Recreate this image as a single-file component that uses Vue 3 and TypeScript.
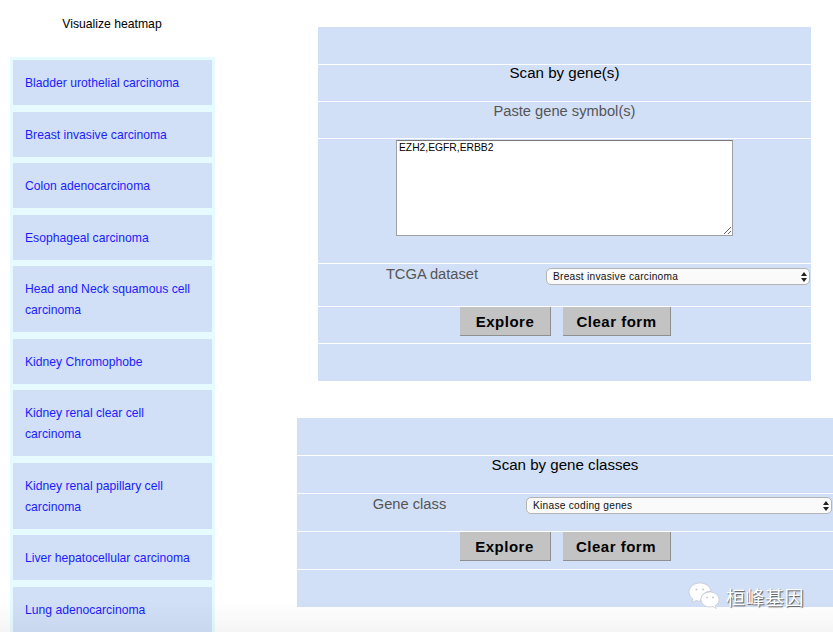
<template>
  <div class="page">
    <aside class="side">
      <h1 class="side-title">Visualize heatmap</h1>
      <ul class="cancer-list">
        <li v-for="c in cancers" :key="c">
          <a href="#" @click.prevent>{{ c }}</a>
        </li>
      </ul>
    </aside>

    <main class="main">
      <section class="panel panel-gene">
        <div class="row"></div>
        <div class="row title">Scan by gene(s)</div>
        <div class="row label">Paste gene symbol(s)</div>
        <div class="row row-area">
          <textarea v-model="genes" class="genes" spellcheck="false"></textarea>
        </div>
        <div class="row row-pick">
          <label class="label">TCGA dataset</label>
          <div class="pick">
            <select v-model="dataset">
              <option v-for="c in cancers" :key="c">{{ c }}</option>
            </select>
            <svg class="arrows" width="6" height="10" viewBox="0 0 6 10"><path d="M3 0 6 4H0zM3 10 0 6h6z" /></svg>
          </div>
        </div>
        <div class="row row-btns">
          <button type="button" class="btn-explore">Explore</button>
          <button type="button" class="btn-clear">Clear form</button>
        </div>
        <div class="row"></div>
      </section>

      <section class="panel panel-class">
        <div class="row"></div>
        <div class="row title">Scan by gene classes</div>
        <div class="row row-pick">
          <label class="label">Gene class</label>
          <div class="pick">
            <select v-model="geneClass">
              <option>Kinase coding genes</option>
              <option>Transcription factors</option>
            </select>
            <svg class="arrows" width="6" height="10" viewBox="0 0 6 10"><path d="M3 0 6 4H0zM3 10 0 6h6z" /></svg>
          </div>
        </div>
        <div class="row row-btns">
          <button type="button" class="btn-explore">Explore</button>
          <button type="button" class="btn-clear">Clear form</button>
        </div>
        <div class="row"></div>
      </section>
    </main>

    <!-- screenshot fade + watermark sit over the page -->
    <div class="fade"></div>
    <div class="mark">
      <svg width="32" height="28" viewBox="0 0 32 28">
        <path d="M12 1C6 1 1 5 1 10c0 3 1.600 5.400 4 7l-1 3.500 4-2c1.200.4 2.600.6 4 .6h1c-.6-5.600 3.600-9.800 10-10C22 4 17.500 1 12 1z" fill="#fff" stroke="#b9bcc4" stroke-width=".6" />
        <path d="M22 10c-5 0-9 3.400-9 7.500s4 7.500 9 7.500c1 0 2-.2 3-.4l3.200 1.900-.8-3c2.400-1.400 3.600-3.500 3.600-6 0-4.100-4-7.500-9-7.500z" fill="#fff" stroke="#b9bcc4" stroke-width=".6" />
        <circle cx="8.500" cy="7.500" r="1" fill="#c3c6cc" />
        <circle cx="15" cy="7.500" r="1" fill="#c3c6cc" />
        <circle cx="19" cy="15.500" r=".9" fill="#c3c6cc" />
        <circle cx="25" cy="15.500" r=".9" fill="#c3c6cc" />
      </svg>
      <span>桓峰基因</span>
    </div>
  </div>
</template>

<script setup lang="ts">
import { ref } from 'vue'

const cancers = [
  'Bladder urothelial carcinoma',
  'Breast invasive carcinoma',
  'Colon adenocarcinoma',
  'Esophageal carcinoma',
  'Head and Neck squamous cell carcinoma',
  'Kidney Chromophobe',
  'Kidney renal clear cell carcinoma',
  'Kidney renal papillary cell carcinoma',
  'Liver hepatocellular carcinoma',
  'Lung adenocarcinoma',
]

const genes = ref('EZH2,EGFR,ERBB2')
const dataset = ref('Breast invasive carcinoma')
const geneClass = ref('Kinase coding genes')
</script>

<style>
html, body {
  margin: 0;
  height: 100%;
  overflow: hidden;
  background: #fff;
}
</style>

<style scoped>
.page {
  position: relative;
  display: flex;
  width: 833px;
  height: 635px;
  overflow: hidden;
  font-family: "Liberation Sans", Arial, sans-serif;
  color: #000;
}

/* left list */
.side {
  width: 205px;
  margin-left: 10px;
  flex: none;
}
.side-title {
  margin: 17px 0 0;
  height: 40px;
  padding-right: 1px;
  font-size: 12.200px;
  line-height: 14px;
  font-weight: 400;
  text-align: center;
}
.cancer-list {
  list-style: none;
  margin: 0;
  padding: 3px;
  background: #e6fbff;
  display: flex;
  flex-direction: column;
  gap: 6.500px;
}
.cancer-list a {
  display: block;
  padding: 13px 12px 11px;
  background: #d1e0f7;
  color: #1c1cff;
  text-decoration: none;
  font-size: 12.170px;
  line-height: 21px;
}

/* right panels */
.main {
  flex: 1;
  min-width: 0;
  padding-top: 27px;
}
.panel {
  background: #d1e0f7;
  display: flex;
  flex-direction: column;
  gap: 1px;
}
.panel-gene {
  width: 493px;
  margin-left: 103px;
}
.panel-class {
  width: 536px;
  margin: 37px 0 0 82px;
}
.panel .row {
  background: #d1e0f7;
  height: 36px;
  box-shadow: 0 1px 0 #fff;
}
.panel .row:first-child,
.panel .row:last-child {
  height: 37px;
}
.panel .row:last-child {
  box-shadow: none;
}
.panel-class .row {
  height: 37px;
}
.title {
  font-size: 15.100px;
  line-height: 18px;
  text-align: center;
}
.panel-gene .title {
  line-height: 16px;
}
.label {
  font-size: 14.700px;
  line-height: 18px;
  color: #555;
  text-align: center;
}
.panel-class .label {
  padding-right: 4px;
}
.panel .row-area {
  height: 124px;
  padding: 1px 0 0 78px;
  box-sizing: border-box;
}
.genes {
  display: block;
  width: 337px;
  height: 96px;
  box-sizing: border-box;
  margin: 0;
  padding: 1px 2px 2px;
  border: 1px solid #a0a0a0;
  border-top-color: #777;
  background: #fff;
  font: 10.300px/12px "Liberation Sans", Arial, sans-serif;
  color: #000;
  outline: none;
}
.panel .row-pick {
  height: 42px;
  display: grid;
  grid-template-columns: 228px 1fr;
  align-items: start;
  padding-top: 1px;
  box-sizing: border-box;
}
.panel-class .row-pick {
  height: 37px;
  grid-template-columns: 229px 1fr;
}
.panel-class .pick {
  margin-top: 2px;
}
.pick {
  position: relative;
  margin-top: 3px;
  padding-right: 1px;
}
.pick select {
  display: block;
  width: 100%;
  height: 17px;
  box-sizing: border-box;
  margin: 0;
  padding: 0 14px 1px 6px;
  appearance: none;
  border: 1px solid #b4b4b4;
  border-radius: 5px;
  background: #fafafa;
  font: 10.200px "Liberation Sans", Arial, sans-serif;
  letter-spacing: .25px;
  color: #111;
  outline: none;
}
.arrows {
  position: absolute;
  right: 4px;
  top: 4px;
  fill: #222;
}
.panel .row-btns {
  display: flex;
  justify-content: center;
  gap: 12px;
  align-items: flex-start;
}
.panel-gene .row-btns {
  padding-left: 2px;
}
.row-btns button {
  height: 29px;
  margin: 0;
  padding: 0;
  box-sizing: border-box;
  background: #c3c3c3;
  border: 0;
  border-right: 1px solid #8f8f8f;
  border-bottom: 1px solid #8f8f8f;
  font: bold 15px "Liberation Sans", Arial, sans-serif;
  letter-spacing: .5px;
  color: #000;
}
.btn-explore {
  width: 91px;
}
.btn-clear {
  width: 108px;
}

/* bottom shading from the screenshot */
.fade {
  position: absolute;
  left: 0;
  right: 0;
  top: 600px;
  bottom: 0;
  background: linear-gradient(#0000 0, #0000000a 32px, #fff 32px);
  pointer-events: none;
}
.mark {
  position: absolute;
  left: 688px;
  top: 582px;
  display: flex;
  align-items: center;
  gap: 6px;
  pointer-events: none;
}
.mark span {
  font: 19px "Noto Sans CJK SC", sans-serif;
  letter-spacing: .5px;
  color: #fff;
  text-shadow: 1px 1px 1px #555;
}
</style>
